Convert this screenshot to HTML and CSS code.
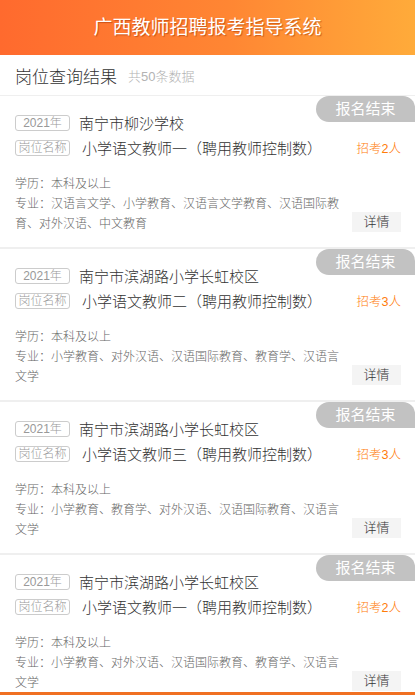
FILE: index.html
```html
<!DOCTYPE html>
<html lang="zh-CN">
<head>
<meta charset="utf-8">
<title>广西教师招聘报考指导系统</title>
<link rel="stylesheet" href="styles.css">
</head>
<body>
<header class="topbar">广西教师招聘报考指导系统</header>
<div class="subbar"><span class="subtitle">岗位查询结果</span><span class="count">共50条数据</span></div>
<main class="list">
  <div class="card">
    <div class="badge">报名结束</div>
    <div class="row"><span class="tag">2021年</span><span class="school">南宁市柳沙学校</span></div>
    <div class="row"><span class="tag">岗位名称</span><span class="post">小学语文教师一（聘用教师控制数）</span><span class="quota">招考2人</span></div>
    <div class="info">
      <div class="text"><p>学历：本科及以上</p><p>专业：汉语言文学、小学教育、汉语言文学教育、汉语国际教育、对外汉语、中文教育</p></div>
      <span class="btn">详情</span>
    </div>
  </div>
  <div class="card">
    <div class="badge">报名结束</div>
    <div class="row"><span class="tag">2021年</span><span class="school">南宁市滨湖路小学长虹校区</span></div>
    <div class="row"><span class="tag">岗位名称</span><span class="post">小学语文教师二（聘用教师控制数）</span><span class="quota">招考3人</span></div>
    <div class="info">
      <div class="text"><p>学历：本科及以上</p><p>专业：小学教育、对外汉语、汉语国际教育、教育学、汉语言文学</p></div>
      <span class="btn">详情</span>
    </div>
  </div>
  <div class="card">
    <div class="badge">报名结束</div>
    <div class="row"><span class="tag">2021年</span><span class="school">南宁市滨湖路小学长虹校区</span></div>
    <div class="row"><span class="tag">岗位名称</span><span class="post">小学语文教师三（聘用教师控制数）</span><span class="quota">招考3人</span></div>
    <div class="info">
      <div class="text"><p>学历：本科及以上</p><p>专业：小学教育、教育学、对外汉语、汉语国际教育、汉语言文学</p></div>
      <span class="btn">详情</span>
    </div>
  </div>
  <div class="card">
    <div class="badge">报名结束</div>
    <div class="row"><span class="tag">2021年</span><span class="school">南宁市滨湖路小学长虹校区</span></div>
    <div class="row"><span class="tag">岗位名称</span><span class="post">小学语文教师一（聘用教师控制数）</span><span class="quota">招考2人</span></div>
    <div class="info">
      <div class="text"><p>学历：本科及以上</p><p>专业：小学教育、对外汉语、汉语国际教育、教育学、汉语言文学</p></div>
      <span class="btn">详情</span>
    </div>
  </div>
</main>
<div class="bottomline"></div>
</body>
</html>
```
FILE: styles.css
```css
* { box-sizing: border-box; }
html, body { margin: 0; padding: 0; }
body {
  background: #efefef;
  font-family: "Liberation Sans", "Noto Sans CJK SC", sans-serif;
  font-weight: 300;
  color: #333;
  overflow: hidden;
}
p { margin: 0; }
.topbar {
  height: 55px;
  line-height: 55px;
  text-align: center;
  color: #fff;
  font-size: 19px;
  font-weight: 400;
  background: linear-gradient(90deg, #ff6a2e 0%, #ff8633 55%, #ffab3a 100%);
  text-shadow: 1px 1px 1px rgba(160, 50, 0, 0.55);
}
.subbar {
  height: 40px;
  background: #fff;
  display: flex;
  align-items: center;
  padding-left: 15px;
  margin-bottom: 1px;
}
.subtitle { font-size: 17px; color: #333; }
.count { font-size: 13px; color: #b3b3b3; margin-left: 11px; }
.list { display: flex; flex-direction: column; gap: 2px; }
.card {
  position: relative;
  background: #fff;
  height: 151px;
  flex-shrink: 0;
  padding: 14px 14px 13px 15px;
}
.badge {
  position: absolute;
  top: 0;
  right: 0;
  width: 99px;
  height: 26px;
  line-height: 26px;
  text-align: center;
  background: #c2c2c2;
  color: #fff;
  font-size: 15px;
  font-weight: 400;
  border-radius: 13px 12px 0 13px;
}
.row {
  height: 25px;
  display: flex;
  align-items: center;
}
.tag {
  width: 55px;
  height: 16px;
  line-height: 14px;
  border: 1px solid #cccccc;
  border-radius: 3px;
  font-size: 12px;
  color: #999;
  text-align: center;
  flex-shrink: 0;
}
.school { font-size: 15px; margin-left: 9px; color: #333; }
.post { font-size: 15px; margin-left: 12px; color: #333; }
.quota { margin-left: auto; font-size: 12.5px; color: #ff7c0a; }
.info {
  margin-top: 14px;
  display: flex;
  align-items: flex-end;
}
.text {
  flex: 1;
  font-size: 12px;
  line-height: 20px;
  color: #666;
}
.btn {
  width: 49px;
  height: 20px;
  line-height: 20px;
  margin-left: 10px;
  margin-bottom: 2px;
  background: #f4f4f4;
  text-align: center;
  font-size: 13px;
  color: #333;
  flex-shrink: 0;
}
.bottomline {
  position: fixed;
  left: 0;
  right: 0;
  bottom: 0;
  height: 3px;
  background: #f07022;
}
```
